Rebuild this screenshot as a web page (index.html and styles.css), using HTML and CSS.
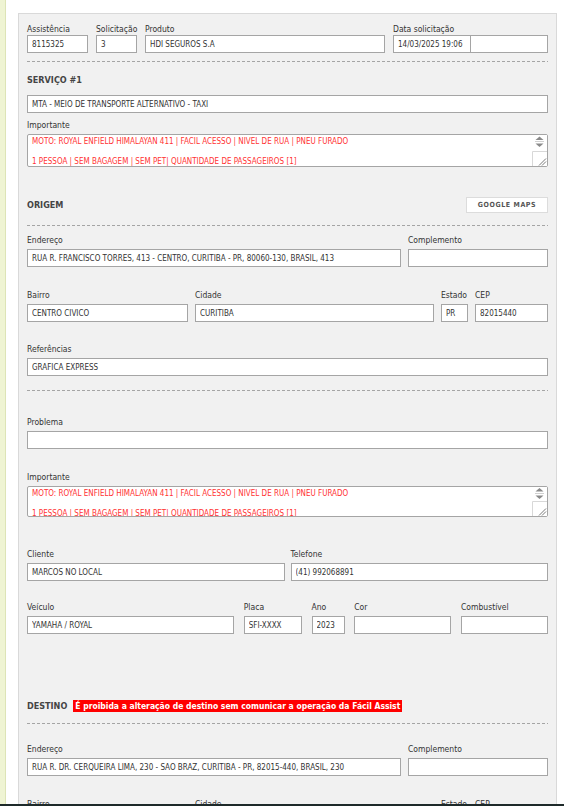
FILE: index.html
```html
<!DOCTYPE html>
<html lang="pt-BR">
<head>
    <meta charset="UTF-8">
    <title>Assistência 8115325</title>
    <link rel="stylesheet" href="styles.css">
</head>
<body>
    <div class="page">
        <div class="side-strip"></div>
        <div class="main">
            <div class="panel">
                <div class="grid row-top">
                    <div class="field"><label class="lbl">Assistência</label><input class="inp" type="text" value="8115325"></div>
                    <div class="field"><label class="lbl">Solicitação</label><input class="inp" type="text" value="3"></div>
                    <div class="field"><label class="lbl">Produto</label><input class="inp" type="text" value="HDI SEGUROS S.A"></div>
                    <div class="field">
                        <label class="lbl">Data solicitação</label>
                        <div class="date-pair">
                            <input class="inp" type="text" value="14/03/2025 19:06">
                            <input class="inp" type="text" value="">
                        </div>
                    </div>
                </div>

                <div class="dash mt8"></div>

                <h3 class="sec-title mt12">SERVIÇO #1</h3>
                <input class="inp mt9" type="text" value="MTA - MEIO DE TRANSPORTE ALTERNATIVO - TAXI">

                <div class="field mt6">
                    <label class="lbl">Importante</label>
                    <div class="note-box">
                        <textarea class="note" readonly>MOTO: ROYAL ENFIELD HIMALAYAN 411 | FACIL ACESSO | NIVEL DE RUA | PNEU FURADO

1 PESSOA | SEM BAGAGEM | SEM PET| QUANTIDADE DE PASSAGEIROS [1]</textarea>
                        <div class="note-scroll">
                            <svg width="15" height="14" viewBox="0 0 15 14"><path d="M3.5 5 L11.5 5 L7.5 1.5 Z" fill="#8a8a8a"/><path d="M3 6.5 H12" stroke="#d0d0d0" stroke-width="1"/><path d="M3.5 8.5 L11.5 8.5 L7.5 12 Z" fill="#8a8a8a"/></svg>
                            <svg width="15" height="15" viewBox="0 0 15 15"><path d="M0.5 15 V0.5 H15" stroke="#d8d8d8" fill="none"/><path d="M14 7.5 L7 14.5 M14 10.5 L10 14.5" stroke="#6a6a6a" stroke-width="0.9"/></svg>
                        </div>
                    </div>
                </div>

                <div class="sec-head mt30">
                    <h3 class="sec-title">ORIGEM</h3>
                    <button class="map-btn">GOOGLE MAPS</button>
                </div>

                <div class="dash mt12"></div>

                <div class="grid row-end mt8">
                    <div class="field"><label class="lbl">Endereço</label><input class="inp" type="text" value="RUA R. FRANCISCO TORRES, 413 - CENTRO, CURITIBA - PR, 80060-130, BRASIL, 413"></div>
                    <div class="field"><label class="lbl">Complemento</label><input class="inp" type="text" value=""></div>
                </div>

                <div class="grid row-bairro mt22">
                    <div class="field"><label class="lbl">Bairro</label><input class="inp" type="text" value="CENTRO CÍVICO"></div>
                    <div class="field"><label class="lbl">Cidade</label><input class="inp" type="text" value="CURITIBA"></div>
                    <div class="field"><label class="lbl">Estado</label><input class="inp" type="text" value="PR"></div>
                    <div class="field"><label class="lbl">CEP</label><input class="inp" type="text" value="82015440"></div>
                </div>

                <div class="field mt21">
                    <label class="lbl">Referências</label>
                    <input class="inp" type="text" value="GRAFICA EXPRESS">
                </div>

                <div class="dash mt14"></div>

                <div class="field mt25">
                    <label class="lbl">Problema</label>
                    <input class="inp" type="text" value="">
                </div>

                <div class="field mt22">
                    <label class="lbl">Importante</label>
                    <div class="note-box note-short">
                        <textarea class="note" readonly>MOTO: ROYAL ENFIELD HIMALAYAN 411 | FACIL ACESSO | NIVEL DE RUA | PNEU FURADO

1 PESSOA | SEM BAGAGEM | SEM PET| QUANTIDADE DE PASSAGEIROS [1]</textarea>
                        <div class="note-scroll">
                            <svg width="15" height="14" viewBox="0 0 15 14"><path d="M3.5 4.5 L11.5 4.5 L7.5 1 Z" fill="#8a8a8a"/><path d="M3 6.5 H12" stroke="#d0d0d0" stroke-width="1"/><path d="M3.5 8.5 L11.5 8.5 L7.5 12 Z" fill="#8a8a8a"/></svg>
                            <svg width="15" height="15" viewBox="0 0 15 15"><path d="M0.5 15 V0.5 H15" stroke="#d8d8d8" fill="none"/><path d="M14 7.5 L7 14.5 M14 10.5 L10 14.5" stroke="#6a6a6a" stroke-width="0.9"/></svg>
                        </div>
                    </div>
                </div>

                <div class="grid row-cli mt31">
                    <div class="field"><label class="lbl">Cliente</label><input class="inp" type="text" value="MARCOS NO LOCAL"></div>
                    <div class="field"><label class="lbl">Telefone</label><input class="inp" type="text" value="(41) 992068891"></div>
                </div>

                <div class="grid row-veic mt20">
                    <div class="field"><label class="lbl">Veículo</label><input class="inp" type="text" value="YAMAHA / ROYAL"></div>
                    <div class="field"><label class="lbl">Placa</label><input class="inp" type="text" value="SFI-XXXX"></div>
                    <div class="field"><label class="lbl">Ano</label><input class="inp" type="text" value="2023"></div>
                    <div class="field"><label class="lbl">Cor</label><input class="inp" type="text" value=""></div>
                    <div class="field"><label class="lbl">Combustível</label><input class="inp" type="text" value=""></div>
                </div>

                <div class="sec-head dest-head mt65">
                    <h3 class="sec-title">DESTINO</h3>
                    <span class="alert">É proibida a alteração de destino sem comunicar a operação da Fácil Assist</span>
                </div>

                <div class="dash mt10"></div>

                <div class="grid row-end mt19">
                    <div class="field"><label class="lbl">Endereço</label><input class="inp" type="text" value="RUA R. DR. CERQUEIRA LIMA, 230 - SÃO BRAZ, CURITIBA - PR, 82015-440, BRASIL, 230"></div>
                    <div class="field"><label class="lbl">Complemento</label><input class="inp" type="text" value=""></div>
                </div>

                <div class="grid row-bairro mt22">
                    <div class="field"><label class="lbl">Bairro</label><input class="inp" type="text" value="SÃO BRAZ"></div>
                    <div class="field"><label class="lbl">Cidade</label><input class="inp" type="text" value="CURITIBA"></div>
                    <div class="field"><label class="lbl">Estado</label><input class="inp" type="text" value="PR"></div>
                    <div class="field"><label class="lbl">CEP</label><input class="inp" type="text" value="82015440"></div>
                </div>
            </div>
        </div>
    </div>
    <div class="bottom-bar"></div>
</body>
</html>
```

FILE: styles.css
```css
body {
    margin: 0;
    background-color: #fff;
    font-family: "DejaVu Sans Condensed", "DejaVu Sans", sans-serif;
    font-stretch: condensed;
    color: #333;
}
.page {
    display: flex;
    min-height: 806px;
}
.side-strip {
    flex: none;
    width: 5px;
    background-color: #eff4d3;
    border-right: 1px solid #dde4b6;
}
.main {
    flex: 1;
    padding: 13px 7px 0 12px;
}
.panel {
    background-color: #f1f1f1;
    border: 1px solid #d9d9d9;
    border-bottom: none;
    padding: 9px 8px 40px;
}
.grid {
    display: grid;
}
.row-top {
    grid-template-columns: 61px 41px 240px 1fr;
    column-gap: 8px;
}
.row-end {
    grid-template-columns: 374px 1fr;
    column-gap: 7px;
}
.row-bairro {
    grid-template-columns: 161px 239px 27px 1fr;
    column-gap: 7px;
}
.row-cli {
    grid-template-columns: 1fr 1fr;
    column-gap: 6px;
}
.row-veic {
    grid-template-columns: 207px 58px 33px 97px 87px;
    justify-content: space-between;
}
.field {
    min-width: 0;
}
.lbl {
    display: block;
    height: 12px;
    margin-bottom: 3px;
    font-size: 8.5px;
    line-height: 12px;
    color: #333;
    white-space: nowrap;
}
.row-top .lbl {
    margin-bottom: 0;
}
.inp {
    display: block;
    width: 100%;
    height: 18px;
    box-sizing: border-box;
    margin: 0;
    padding: 0 4px;
    border: 1px solid #a5a5a5;
    border-radius: 0;
    background-color: #fff;
    font-family: "DejaVu Sans Condensed", "DejaVu Sans", sans-serif;
    font-stretch: condensed;
    font-size: 8px;
    color: #333;
    outline: none;
}
.date-pair {
    display: flex;
}
.date-pair .inp + .inp {
    margin-left: -1px;
}
.dash {
    height: 1px;
    background: repeating-linear-gradient(to right, #a5a5a5 0 3px, transparent 3px 5px);
}
.sec-title {
    margin: 0;
    font-size: 9px;
    line-height: 12px;
    font-weight: bold;
    color: #444;
}
.sec-head {
    display: flex;
    align-items: center;
    justify-content: space-between;
    height: 16px;
}
.map-btn {
    width: 82px;
    height: 16px;
    padding: 0;
    border: 1px solid #dcdcdc;
    background-color: #fff;
    font-family: "DejaVu Sans Condensed", "DejaVu Sans", sans-serif;
    font-stretch: condensed;
    font-size: 7px;
    font-weight: bold;
    letter-spacing: 0.6px;
    color: #555;
}
.dest-head {
    justify-content: flex-start;
    height: 14px;
}
.alert {
    margin-left: 6px;
    padding: 0 2px;
    background-color: #f00;
    color: #fff;
    font-size: 8.5px;
    line-height: 12px;
    font-weight: bold;
    white-space: nowrap;
}
.note-box {
    position: relative;
}
.note {
    display: block;
    width: 100%;
    height: 33px;
    box-sizing: border-box;
    margin: 0;
    padding: 2px 20px 0 4px;
    border: 1px solid #a5a5a5;
    border-radius: 2px;
    background-color: #fff;
    font-family: "DejaVu Sans Condensed", "DejaVu Sans", sans-serif;
    font-stretch: condensed;
    font-size: 8px;
    line-height: 10px;
    color: #f33;
    resize: none;
    overflow: hidden;
    outline: none;
}
.note-short .note {
    height: 31px;
}
.note-scroll {
    position: absolute;
    top: 1px;
    right: 1px;
    bottom: 1px;
    width: 15px;
    display: flex;
    flex-direction: column;
    justify-content: space-between;
    background-color: #fff;
}
.note-scroll svg {
    display: block;
}
.bottom-bar {
    position: fixed;
    left: 0;
    right: 0;
    bottom: 0;
    height: 2px;
    background-color: #1e2a2a;
}
.mt6 { margin-top: 6px; }
.mt8 { margin-top: 8px; }
.mt9 { margin-top: 9px; }
.mt10 { margin-top: 10px; }
.mt12 { margin-top: 12px; }
.mt14 { margin-top: 14px; }
.mt19 { margin-top: 19px; }
.mt20 { margin-top: 20px; }
.mt21 { margin-top: 21px; }
.mt22 { margin-top: 22px; }
.mt25 { margin-top: 25px; }
.mt30 { margin-top: 30px; }
.mt31 { margin-top: 31px; }
.mt65 { margin-top: 65px; }
```
